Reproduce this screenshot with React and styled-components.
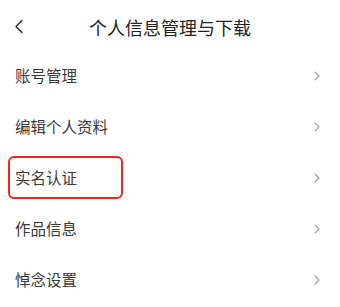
import styled, { createGlobalStyle } from 'styled-components'

const GlobalStyle = createGlobalStyle`
  html, body {
    margin: 0;
    padding: 0;
    background: #ffffff;
  }
  body {
    font-family: 'Noto Sans CJK SC', 'Noto Sans', sans-serif;
  }
`

const Page = styled.div`
  width: 340px;
  height: 307px;
  overflow: hidden;
  background: #ffffff;
`

const NavBar = styled.header`
  display: grid;
  grid-template-columns: 40px 1fr 40px;
  align-items: center;
  height: 50px;
  padding-top: 3px;
  box-sizing: border-box;
`

const BackButton = styled.button`
  display: flex;
  align-items: center;
  justify-content: flex-start;
  padding: 0 0 0 14px;
  border: 0;
  background: none;
  height: 100%;
`

const Title = styled.h1`
  margin: 0;
  text-align: center;
  font-size: 18px;
  font-weight: 400;
  color: #222222;
  line-height: 1;
`

const List = styled.ul`
  list-style: none;
  margin: 0;
  padding: 0;
`

const Row = styled.li`
  display: flex;
  align-items: center;
  justify-content: space-between;
  height: 51px;
  padding: 0 20px 0 15px;
`

const Label = styled.span`
  font-size: 15.5px;
  color: #383838;
  line-height: 1;
  ${(p) =>
    p.$marked &&
    `
    margin-left: -7px;
    padding: 12px 44px 12px 5px;
    border: 2px solid #f3241b;
    border-radius: 6px;
  `}
`

const ChevronLeft = () => (
  <svg width="10" height="15" viewBox="0 0 10 15" fill="none">
    <path d="M8 1.5 L2 7.5 L8 13.5" stroke="#222" strokeWidth="1.4" strokeLinecap="round" strokeLinejoin="round" />
  </svg>
)

const ChevronRight = () => (
  <svg width="6" height="10" viewBox="0 0 6 10" fill="none">
    <path d="M1 1 L5 5 L1 9" stroke="#a0a0a0" strokeWidth="1.1" strokeLinecap="round" strokeLinejoin="round" />
  </svg>
)

const items = [
  { label: '账号管理' },
  { label: '编辑个人资料' },
  { label: '实名认证', marked: true },
  { label: '作品信息' },
  { label: '悼念设置' },
]

export default function App() {
  return (
    <>
      <GlobalStyle />
      <Page>
        <NavBar>
          <BackButton aria-label="返回">
            <ChevronLeft />
          </BackButton>
          <Title>个人信息管理与下载</Title>
          <span />
        </NavBar>
        <List>
          {items.map((item) => (
            <Row key={item.label}>
              <Label $marked={item.marked}>{item.label}</Label>
              <ChevronRight />
            </Row>
          ))}
        </List>
      </Page>
    </>
  )
}
